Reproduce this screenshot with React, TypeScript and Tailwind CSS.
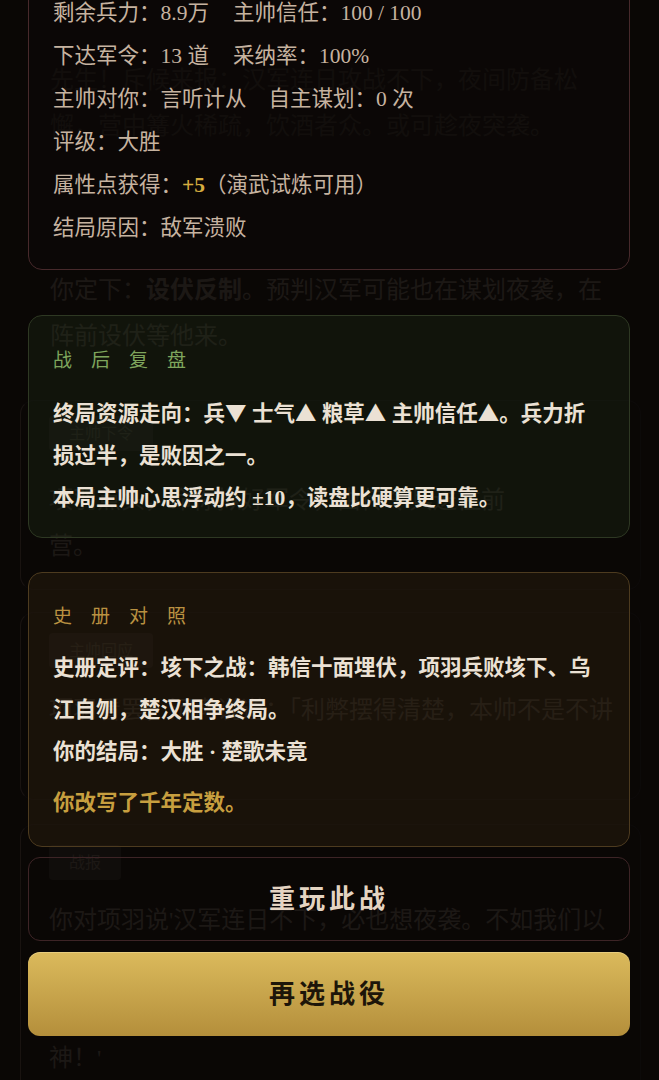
import React from "react";

const fontStack = "font-['Liberation_Serif','Noto_Sans_CJK_SC',serif]";

function BgLine({ children }: { children: React.ReactNode }) {
  return <div className="whitespace-nowrap">{children}</div>;
}

function Tag({ children }: { children: React.ReactNode }) {
  return (
    <div className="self-start rounded-[4px] bg-[#3b3128] px-[20px] h-[35px] flex items-center text-[16px] text-[#66574c] leading-none">
      {children}
    </div>
  );
}

const blockBorder =
  "ml-[20px] mr-[18px] rounded-[14px] border border-[#2e2420] border-l-[#5a463c]";

function BattleLog() {
  return (
    <div className="flex flex-col text-[24px] leading-[46px] text-[#66574c]">
      <div className="pt-[57px] px-[50px]">
        <BgLine>先生！斥候来报：汉军连日攻战不下，夜间防备松</BgLine>
        <BgLine>懈，营中篝火稀疏，饮酒者众。或可趁夜突袭。</BgLine>
      </div>
      <div className="mt-[118px] px-[50px]">
        <BgLine>
          你定下：<span className="font-bold">设伏反制</span>。预判汉军可能也在谋划夜袭，在
        </BgLine>
        <BgLine>阵前设伏等他来。</BgLine>
      </div>
      <div className={`mt-[41px] ${blockBorder} pt-[15px] pb-[20px] px-[28px] flex flex-col`}>
        <Tag>主帅下令</Tag>
        <div className="mt-[26px]">
          <BgLine>项羽点头，命你拟好军令，由传令兵送往前</BgLine>
          <BgLine>营。</BgLine>
        </div>
      </div>
      <div className={`mt-[22px] ${blockBorder} pt-[20px] pb-[66px] px-[28px] flex flex-col`}>
        <Tag>主帅回应</Tag>
        <div className="mt-[19px]">
          <BgLine>项羽看罢，沉声说道：「利弊摆得清楚，本帅不是不讲</BgLine>
        </div>
      </div>
      <div className={`mt-[24px] ${blockBorder} rounded-b-none border-b-0 pt-[20px] px-[28px] flex flex-col`}>
        <Tag>战报</Tag>
        <div className="mt-[17px]">
          <BgLine>你对项羽说'汉军连日不下，必也想夜袭。不如我们以</BgLine>
          <BgLine>逸待劳，在营前设下伏兵，待其来袭，一举破之。</BgLine>
          <BgLine>项羽闻言大喜，拍案道：'先生用兵，真乃</BgLine>
          <BgLine>神！'</BgLine>
        </div>
      </div>
    </div>
  );
}

function Tri({ children }: { children: React.ReactNode }) {
  return <span className="font-['Noto_Sans_CJK_SC',sans-serif] leading-none">{children}</span>;
}

function Line({ children }: { children: React.ReactNode }) {
  return <div className="h-[42px] whitespace-nowrap">{children}</div>;
}

function StatsCard() {
  return (
    <div className="rounded-[14px] border border-[#47292b] bg-[#0c0807]/60 px-[24px] pt-[31px] pb-[19px] text-[21.5px] leading-[43px] text-[#c6b3a0]">
      <div className="whitespace-nowrap">
        <span className="mr-[24px]">剩余兵力：8.9万</span>
        <span>主帅信任：100 / 100</span>
      </div>
      <div className="whitespace-nowrap">
        <span className="mr-[24px]">下达军令：13 道</span>
        <span>采纳率：100%</span>
      </div>
      <div className="whitespace-nowrap">
        <span className="mr-[22px]">主帅对你：言听计从</span>
        <span>自主谋划：0 次</span>
      </div>
      <div>评级：大胜</div>
      <div className="whitespace-nowrap">
        属性点获得：<span className="font-bold text-[#d6ac3f]">+5</span>（演武试炼可用）
      </div>
      <div>结局原因：敌军溃败</div>
    </div>
  );
}

function ReviewCard() {
  return (
    <div className="mt-[45px] rounded-[14px] border border-[#2e3823] bg-[#283a1e]/25 px-[24px] pt-[30px] pb-[18px]">
      <div className="h-[30px] text-[19px] leading-[30px] tracking-[1em] text-[#7ea55c]">战后复盘</div>
      <div className="mt-[17px] text-[21.5px] leading-[42px] font-semibold text-[#ebe1d4]">
        <Line>
          终局资源走向：兵<Tri>▼</Tri> 士气<Tri>▲</Tri> 粮草<Tri>▲</Tri> 主帅信任<Tri>▲</Tri>。兵力折
        </Line>
        <Line>损过半，是败因之一。</Line>
        <Line>本局主帅心思浮动约 ±10，读盘比硬算更可靠。</Line>
      </div>
    </div>
  );
}

function ChronicleCard() {
  return (
    <div className="mt-[34px] rounded-[14px] border border-[#4d3b1f] bg-[#463416]/25 px-[24px] pt-[29px] pb-[22px]">
      <div className="h-[30px] text-[19px] leading-[30px] tracking-[1em] text-[#b99141]">史册对照</div>
      <div className="mt-[15px] text-[21.5px] leading-[42px] font-semibold text-[#ebe1d4]">
        <Line>史册定评：垓下之战：韩信十面埋伏，项羽兵败垓下、乌</Line>
        <Line>江自刎，楚汉相争终局。</Line>
        <Line>你的结局：大胜 · 楚歌未竟</Line>
      </div>
      <div className="mt-[9px] h-[42px] text-[21.5px] leading-[42px] font-semibold text-[#c79f3f]">
        你改写了千年定数。
      </div>
    </div>
  );
}

export default function App() {
  return (
    <div className={`relative h-[1080px] w-full overflow-hidden bg-[#241915] ${fontStack}`}>
      <BattleLog />

      {/* result dialog over the battle log */}
      <div className="absolute inset-0 bg-black/[0.72]">
        <div className="-mt-[40px] flex flex-col pl-[28px] pr-[29px]">
          <StatsCard />
          <ReviewCard />
          <ChronicleCard />
          <button className="mt-[10px] h-[84px] shrink-0 rounded-[12px] border border-[#3d2426] bg-transparent text-[26px] font-bold tracking-[4px] text-[#e4d4c2] flex items-center justify-center">
            重玩此战
          </button>
          <button className="mt-[11px] h-[84px] shrink-0 rounded-[12px] bg-gradient-to-b from-[#dbba5c] to-[#b48f3b] text-[26px] font-bold tracking-[4px] text-[#1d1509] flex items-center justify-center shadow-[inset_0_1px_0_rgba(255,240,190,0.35)]">
            再选战役
          </button>
        </div>
      </div>
    </div>
  );
}
